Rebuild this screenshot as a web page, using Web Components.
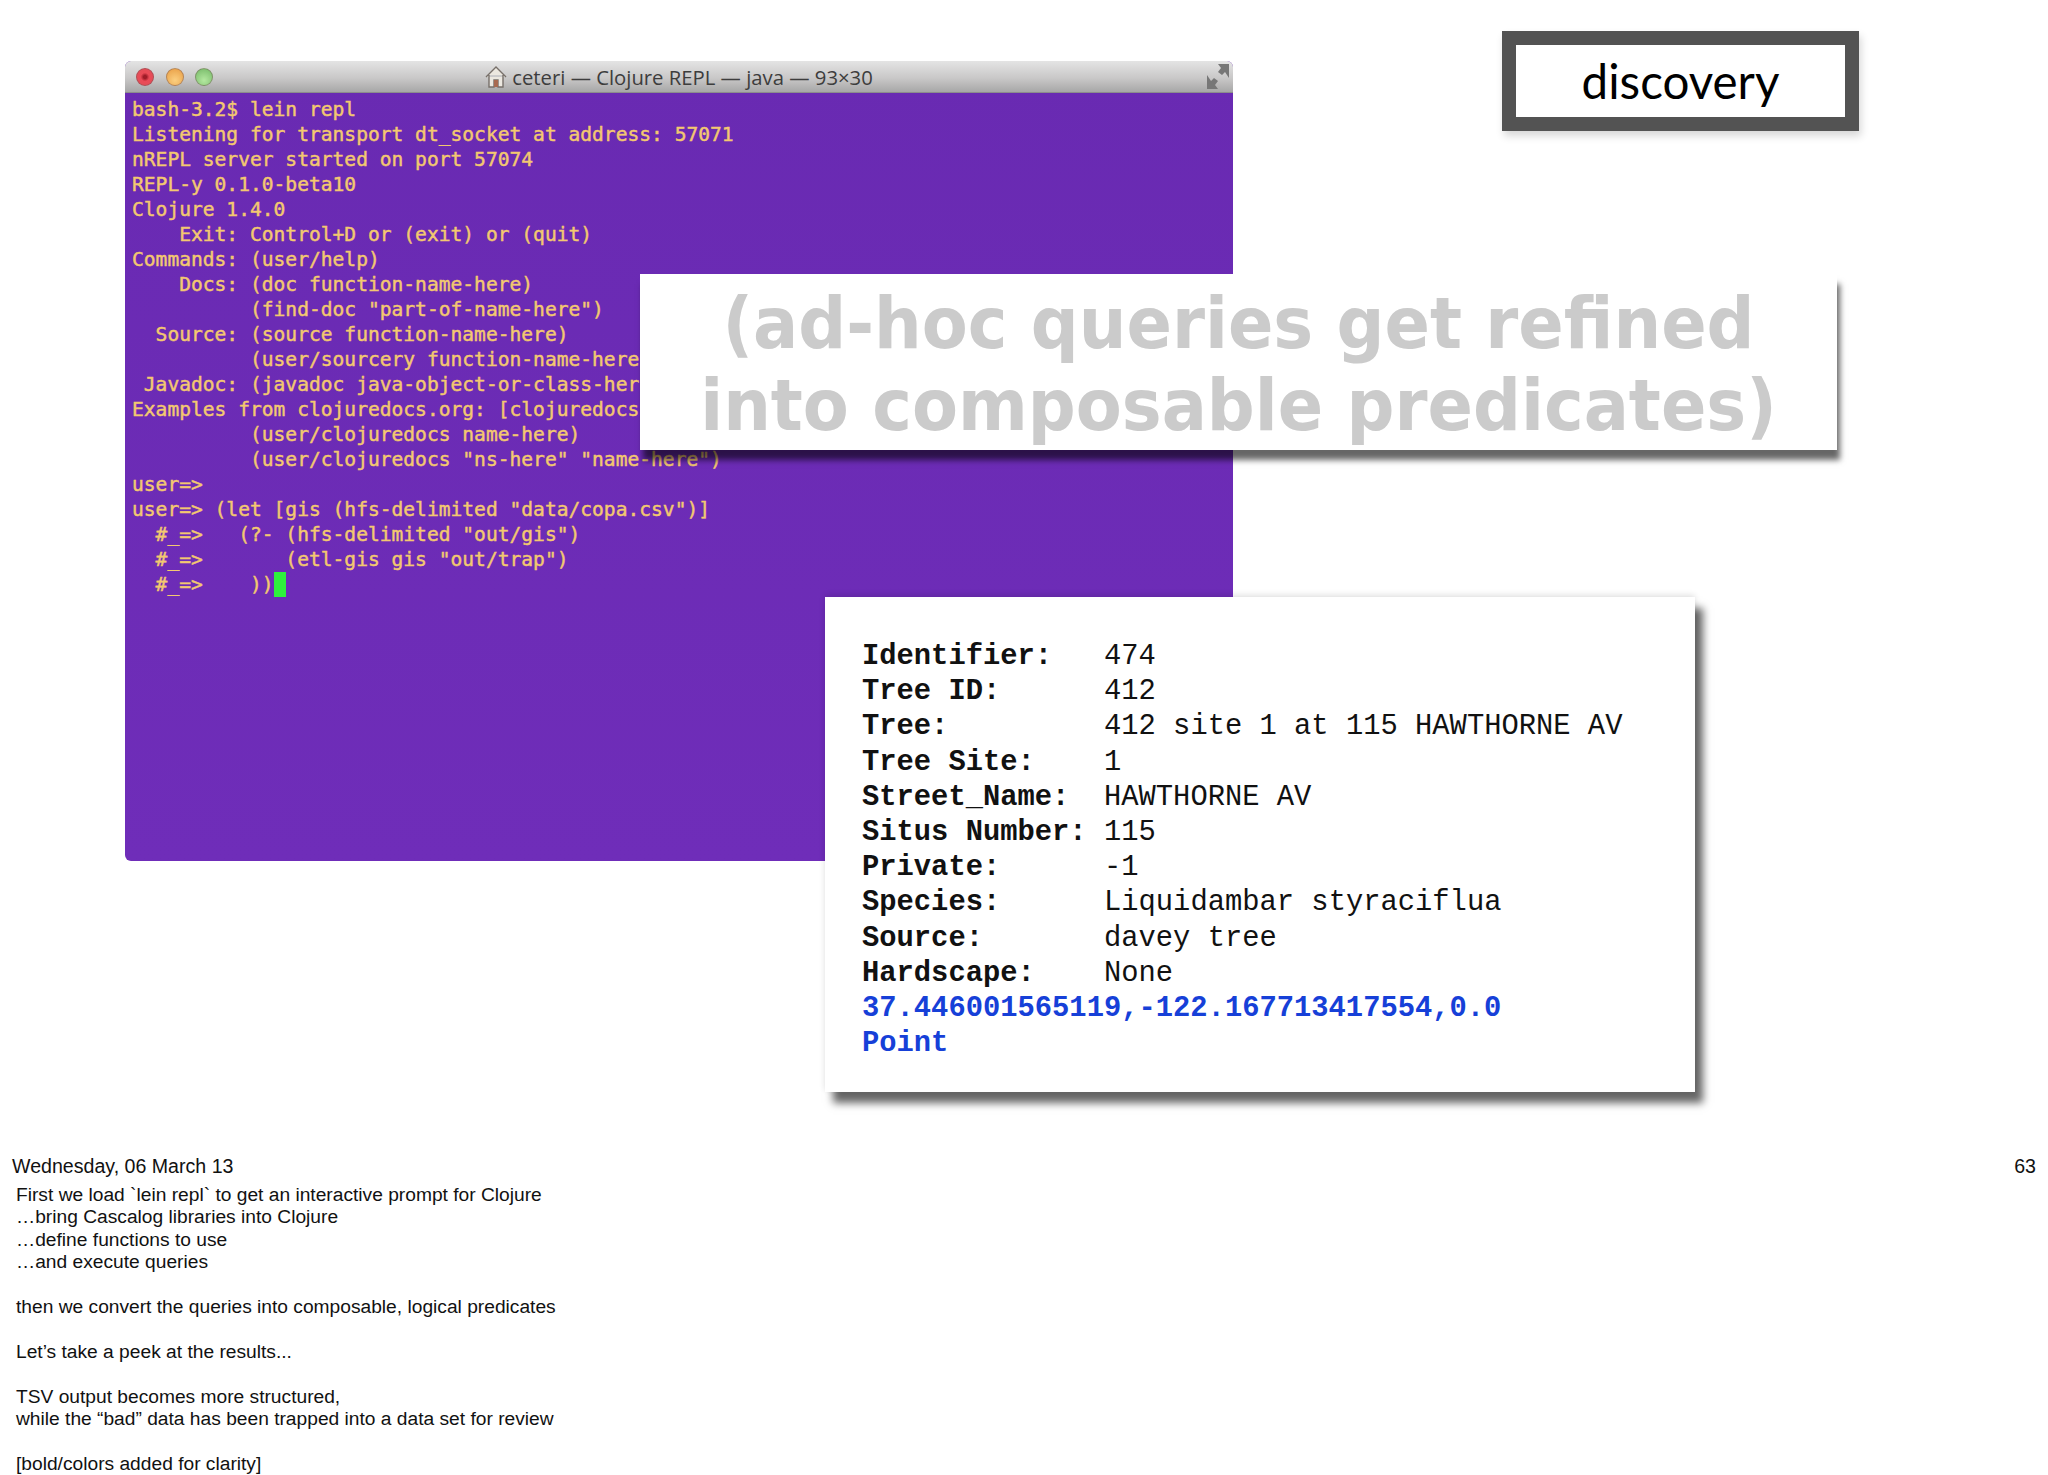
<!DOCTYPE html>
<html>
<head>
<meta charset="utf-8">
<title>discovery</title>
<style>
  html, body { margin: 0; background: #fff; }
</style>
</head>
<body>
<slide-page>
  <terminal-window slot="main" title-text="ceteri — Clojure REPL — java — 93×30"></terminal-window>
  <section-tag slot="tag">discovery</section-tag>
  <callout-panel slot="overlay">(ad-hoc queries get refined<br>into composable predicates)</callout-panel>
  <record-card slot="overlay"></record-card>
</slide-page>
<notes-footer date="Wednesday, 06 March 13" page="63"></notes-footer>

<script>
class SlidePage extends HTMLElement {
  constructor() {
    super();
    this.shadowDOM = this.attachShadow({mode: 'open'});
    this.shadowDOM.innerHTML = `
      <style>
        :host {
          display: flex;
          position: relative;
          box-sizing: border-box;
          height: 1150px;
          padding: 31px 189px 0 125px;
          justify-content: space-between;
          align-items: flex-start;
        }
      </style>
      <slot name="main"></slot>
      <slot name="tag"></slot>
      <slot name="overlay"></slot>
    `;
  }
}

class TerminalWindow extends HTMLElement {
  constructor() {
    super();
    this.shadowDOM = this.attachShadow({mode: 'open'});
  }

  connectedCallback() {
    this.render();
  }

  render() {
    const lines = [
      'bash-3.2$ lein repl',
      'Listening for transport dt_socket at address: 57071',
      'nREPL server started on port 57074',
      'REPL-y 0.1.0-beta10',
      'Clojure 1.4.0',
      '    Exit: Control+D or (exit) or (quit)',
      'Commands: (user/help)',
      '    Docs: (doc function-name-here)',
      '          (find-doc "part-of-name-here")',
      '  Source: (source function-name-here)',
      '          (user/sourcery function-name-here)',
      ' Javadoc: (javadoc java-object-or-class-here)',
      'Examples from clojuredocs.org: [clojuredocs or cdoc]',
      '          (user/clojuredocs name-here)',
      '          (user/clojuredocs "ns-here" "name-here")',
      'user=>',
      'user=> (let [gis (hfs-delimited "data/copa.csv")]',
      '  #_=>   (?- (hfs-delimited "out/gis")',
      '  #_=>       (etl-gis gis "out/trap")',
      '  #_=>    ))'
    ];
    this.shadowDOM.innerHTML = `
      <style>
        :host {
          display: block;
          width: 1108px;
          height: 800px;
          margin-top: 30px;
          border-radius: 6px;
          overflow: hidden;
          background: linear-gradient(#692ab2, #6f2db9);
        }
        .bar {
          display: flex;
          align-items: center;
          box-sizing: border-box;
          height: 32px;
          padding: 0 4px 0 11px;
          background: linear-gradient(#e4e4e4, #c9c8c8 55%, #a7a7a7);
          border-bottom: 1px solid #8c8c8c;
        }
        .lights { display: flex; gap: 11.5px; }
        .light {
          width: 18px;
          height: 18px;
          border-radius: 50%;
          box-sizing: border-box;
          border: 1px solid rgba(110, 80, 80, .45);
        }
        .red { background: radial-gradient(circle, #a01c28 14%, #ea4a56 38%, #e0505a 100%); }
        .orange { background: radial-gradient(circle at 50% 70%, #fbcf80, #e89c42); }
        .green { background: radial-gradient(circle at 50% 70%, #b4e8a0, #74b866); }
        .title {
          flex: 1;
          display: flex;
          justify-content: center;
          align-items: center;
          gap: 5px;
          padding-right: 62px;
          font: 20.3px "Open Sans", sans-serif;
          color: #3d3d3d;
          white-space: nowrap;
        }
        pre {
          margin: 0;
          padding: 4px 0 0 7px;
          font: 19.6px/25px "DejaVu Sans Mono", monospace;
          color: #f3c870;
          -webkit-text-stroke: .45px #f3c870;
        }
        .cursor {
          display: inline-block;
          width: 12px;
          height: 25px;
          vertical-align: top;
          background: #2ef03c;
        }
      </style>
      <div class="bar">
        <div class="lights">
          <div class="light red"></div>
          <div class="light orange"></div>
          <div class="light green"></div>
        </div>
        <div class="title">
          <svg width="22" height="23" viewBox="0 0 22 23">
            <path d="M1 12 L11 2 L21 12 M4 10 V22 H9 V15 H13 V22 H18 V10" fill="#ece8e0" stroke="#77706a" stroke-width="1.4"/>
            <rect x="9" y="15" width="4" height="7" fill="#a86a50"/>
          </svg>
          <span>${this.getAttribute('title-text')}</span>
        </div>
        <svg width="22" height="25" viewBox="0 0 22 25">
          <path d="M0 11 V25 H11 L8 21 L11 17 L7 14 L4 17 Z M22 14 V0 H11 L14 4 L11 8 L15 11 L18 8 Z" fill="#777"/>
        </svg>
      </div>
      <pre>${lines.join('\n').replace(/"/g, '&quot;')}<span class="cursor"></span></pre>
    `;
  }
}

class SectionTag extends HTMLElement {
  constructor() {
    super();
    this.shadowDOM = this.attachShadow({mode: 'open'});
    this.shadowDOM.innerHTML = `
      <style>
        :host {
          display: flex;
          justify-content: center;
          align-items: center;
          box-sizing: border-box;
          width: 357px;
          height: 100px;
          padding-bottom: 2px;
          border: 14px solid #535353;
          background: #fff;
          box-shadow: 2px 5px 8px rgba(0, 0, 0, .16);
          font: 47.5px Lato, sans-serif;
          color: #000;
        }
      </style>
      <slot></slot>
    `;
  }
}

class CalloutPanel extends HTMLElement {
  constructor() {
    super();
    this.shadowDOM = this.attachShadow({mode: 'open'});
    this.shadowDOM.innerHTML = `
      <style>
        :host {
          position: absolute;
          left: 640px;
          top: 274px;
          width: 1197px;
          height: 176px;
          box-sizing: border-box;
          padding-top: 14px;
          background: #fff;
          box-shadow: 3px 10px 6px rgba(0, 0, 0, .6);
          text-align: center;
          font: bold 67px/77px "DejaVu Sans", sans-serif;
          color: #cbcbcb;
        }
        .text {
          display: block;
          transform: scaleY(1.07);
        }
      </style>
      <span class="text"><slot></slot></span>
    `;
  }
}

class RecordCard extends HTMLElement {
  constructor() {
    super();
    this.shadowDOM = this.attachShadow({mode: 'open'});
  }

  connectedCallback() {
    const rows = [
      ['Identifier:', '474'],
      ['Tree ID:', '412'],
      ['Tree:', '412 site 1 at 115 HAWTHORNE AV'],
      ['Tree Site:', '1'],
      ['Street_Name:', 'HAWTHORNE AV'],
      ['Situs Number:', '115'],
      ['Private:', '-1'],
      ['Species:', 'Liquidambar styraciflua'],
      ['Source:', 'davey tree'],
      ['Hardscape:', 'None']
    ];
    this.shadowDOM.innerHTML = `
      <style>
        :host {
          position: absolute;
          left: 825px;
          top: 597px;
          width: 870px;
          height: 495px;
          box-sizing: border-box;
          padding: 42px 0 0 37px;
          background: #fff;
          box-shadow: 8px 11px 8px rgba(0, 0, 0, .6), 0 -2px 6px rgba(0, 0, 0, .12);
          font: 28.8px/35.2px "Liberation Mono", monospace;
          color: #111;
        }
        .rows {
          display: grid;
          grid-template-columns: 242px 1fr;
        }
        .key { font-weight: bold; }
        .point {
          font-weight: bold;
          color: #1640d8;
        }
      </style>
      <div class="rows">
        ${rows.map(r => `<div class="key">${r[0]}</div><div>${r[1]}</div>`).join('')}
      </div>
      <div class="point">37.446001565119,-122.167713417554,0.0</div>
      <div class="point">Point</div>
    `;
  }
}

class NotesFooter extends HTMLElement {
  constructor() {
    super();
    this.shadowDOM = this.attachShadow({mode: 'open'});
  }

  connectedCallback() {
    this.shadowDOM.innerHTML = `
      <style>
        :host {
          display: block;
          padding: 5px 12px 0 12px;
          font: 19.6px/23px "Liberation Sans", Arial, sans-serif;
          color: #111;
        }
        .head {
          display: flex;
          justify-content: space-between;
        }
        .body {
          margin: 0;
          padding: 6px 0 0 4px;
          font: 19.2px/22.4px "Liberation Sans", Arial, sans-serif;
          white-space: pre-line;
        }
      </style>
      <div class="head">
        <span>${this.getAttribute('date')}</span>
        <span>${this.getAttribute('page')}</span>
      </div>
      <p class="body">First we load \`lein repl\` to get an interactive prompt for Clojure
…bring Cascalog libraries into Clojure
…define functions to use
…and execute queries

then we convert the queries into composable, logical predicates

Let’s take a peek at the results...

TSV output becomes more structured,
while the “bad” data has been trapped into a data set for review

[bold/colors added for clarity]</p>
    `;
  }
}

customElements.define('slide-page', SlidePage);
customElements.define('terminal-window', TerminalWindow);
customElements.define('section-tag', SectionTag);
customElements.define('callout-panel', CalloutPanel);
customElements.define('record-card', RecordCard);
customElements.define('notes-footer', NotesFooter);
</script>
</body>
</html>
